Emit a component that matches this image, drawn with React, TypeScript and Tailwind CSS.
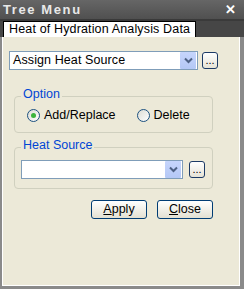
import React from "react";

const font = { fontFamily: '"Liberation Sans", Arial, sans-serif' };

function Chevron() {
  return (
    <svg width="9" height="7" viewBox="0 0 9 7">
      <path d="M1 1.5 L4.5 5 L8 1.5" fill="none" stroke="#4d6185" strokeWidth="2" />
    </svg>
  );
}

function Combo({ text, w }: { text?: string; w: string }) {
  return (
    <div className={`${w} h-[19px] bg-white border border-[#7f9db9] flex items-center`}>
      <div className="flex-1 pl-[3px] text-[12.5px] text-black leading-none tracking-[0.1px]">{text}</div>
      <div className="w-[16px] h-[17px] mr-[1px] bg-gradient-to-b from-[#c6d5fc] to-[#b4c8f6] flex items-center justify-center rounded-[1px]">
        <Chevron />
      </div>
    </div>
  );
}

function Dots() {
  return (
    <div className="w-[16px] h-[17px] border border-[#1c3a66] rounded-[3px] bg-gradient-to-b from-white to-[#e6e3d6] flex items-end justify-center pb-[2px]">
      <span className="text-[11px] leading-none text-black tracking-[0px]">...</span>
    </div>
  );
}

function Radio({ on }: { on?: boolean }) {
  return (
    <div className="w-[13px] h-[13px] rounded-full border border-[#1c5180] bg-gradient-to-br from-[#dcdcd4] to-white flex items-center justify-center">
      {on && <div className="w-[5px] h-[5px] rounded-full bg-[#3cb43c]" />}
    </div>
  );
}

function Btn({ children }: { children: React.ReactNode }) {
  return (
    <div className="w-[56px] h-[19px] border border-[#003c74] rounded-[3px] bg-gradient-to-b from-white to-[#e3e0d2] flex items-center justify-center text-[12.5px] text-black leading-none">
      {children}
    </div>
  );
}

export default function App() {
  return (
    <div className="w-[244px] h-[289px] bg-[#8a8a8a] flex flex-col" style={font}>
      <div className="h-[19px] bg-gradient-to-b from-[#666666] to-[#505050] flex items-center justify-between pl-[3px] pr-[8px]">
        <span className="text-[13px] font-bold text-[#e8e8e8] tracking-[1.6px] leading-none">Tree Menu</span>
        <span className="text-[13px] font-bold text-white leading-none">✕</span>
      </div>
      <div className="h-[18px] bg-[#464646] flex items-end pl-[3px] border-t-[2px] border-[#3a3a3a]">
        <div className="h-[16px] bg-white border border-black border-b-0 px-[5px] flex items-center text-[12.5px] text-black leading-none tracking-[0.15px]">
          Heat of Hydration Analysis Data
        </div>
      </div>
      <div className="flex-1 flex flex-col border-l border-[#8a8a8a] border-r-[3px] border-r-[#8a8a8a] border-b-[2px] mb-[1px] ml-[1px] mr-[1px]">
        <div className="flex-1 bg-[#ece9d8] border-l border-white border-r border-r-white border-b border-b-white flex flex-col pl-[6px] pt-[14px]">
          <div className="flex items-center gap-[4px]">
            <Combo text="Assign Heat Source" w="w-[189px]" />
            <Dots />
          </div>
          <div className="relative mt-[26px] ml-[5px] w-[199px] h-[37px] border border-[#d0d0bf] rounded-[4px]">
            <span className="absolute -top-[9px] left-[6px] bg-[#ece9d8] px-[2px] text-[12.5px] text-[#0046d5] leading-none">Option</span>
            <div className="flex items-center mt-[12px] ml-[12px]">
              <Radio on />
              <span className="ml-[4px] text-[12.5px] text-black leading-none">Add/Replace</span>
              <div className="ml-[21px]"><Radio /></div>
              <span className="ml-[4px] text-[12.5px] text-black leading-none">Delete</span>
            </div>
          </div>
          <div className="relative mt-[14px] ml-[5px] w-[199px] h-[42px] border border-[#d0d0bf] rounded-[4px]">
            <span className="absolute -top-[9px] left-[6px] bg-[#ece9d8] px-[2px] text-[12.5px] text-[#0046d5] leading-none">Heat Source</span>
            <div className="flex items-center gap-[6px] mt-[12px] ml-[6px]">
              <Combo w="w-[162px]" />
              <Dots />
            </div>
          </div>
          <div className="flex justify-end gap-[10px] mt-[11px] mr-[26px]">
            <Btn><span className="underline">A</span>pply</Btn>
            <Btn><span className="underline">C</span>lose</Btn>
          </div>
        </div>
      </div>
    </div>
  );
}
